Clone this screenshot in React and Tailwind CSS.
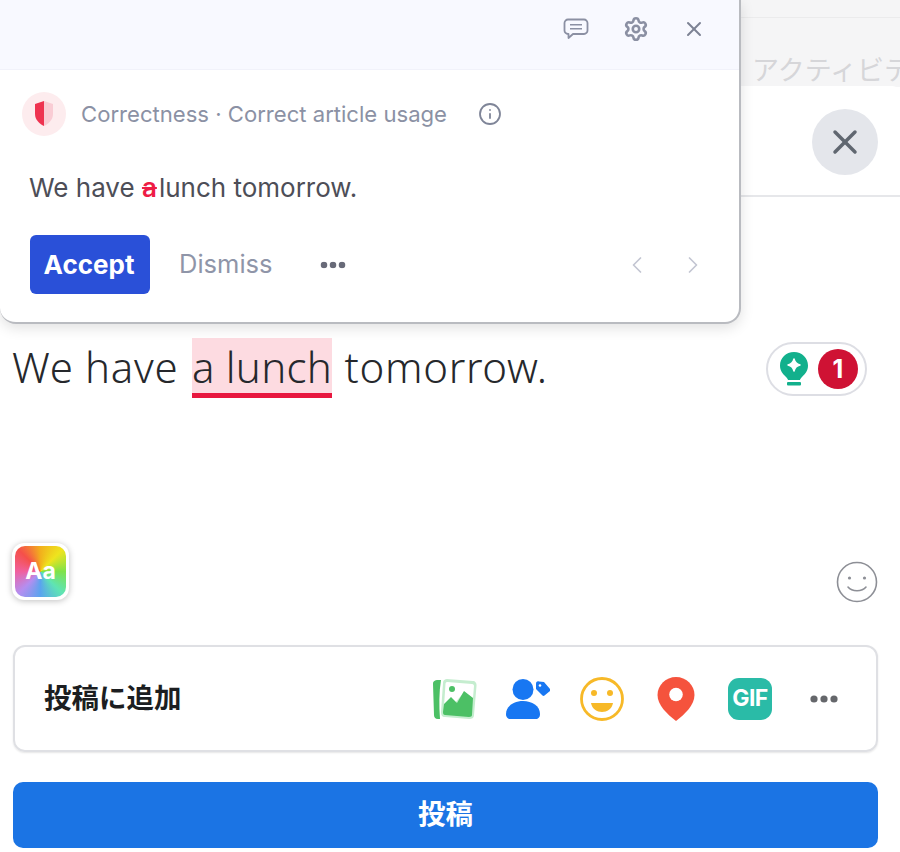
import React from 'react';
import { Settings, X, ChevronLeft, ChevronRight, Info } from 'lucide-react';

const Dots = ({ className }) => (
  <svg width="30" height="8" viewBox="0 0 30 8" className={className} fill="currentColor">
    <circle cx="5" cy="4" r="3.6" />
    <circle cx="15" cy="4" r="3.6" />
    <circle cx="25" cy="4" r="3.6" />
  </svg>
);

const ShieldIcon = () => (
  <svg width="22" height="28" viewBox="0 0 22 28">
    <path d="M11 1 L20 4 V14 C20 20 15 24 11 26 Z" fill="#f9ccd4" />
    <path d="M11 1 L2 4 V14 C2 20 7 24 11 26 Z" fill="#ee3350" />
  </svg>
);

const ChatIcon = () => (
  <svg width="26" height="22" viewBox="0 0 26 22" fill="none" stroke="#8b90a3" strokeWidth="1.8">
    <path d="M5 1.5 H21 A3.5 3.5 0 0 1 24.5 5 V12.5 A3.5 3.5 0 0 1 21 16 H10 L5.5 20 V16 H5 A3.5 3.5 0 0 1 1.5 12.5 V5 A3.5 3.5 0 0 1 5 1.5 Z" strokeLinejoin="round" />
    <path d="M7 6.8 H19 M7 10.8 H19" strokeWidth="1.5" />
  </svg>
);

const BulbIcon = () => (
  <svg width="28" height="34" viewBox="0 0 28 34">
    <path d="M14 0 C22 0 28 6 28 13.500 C28 19 25 22 22 25 C20.500 26.500 20 27.500 20 28 H8 C8 27.500 7.500 26.500 6 25 C3 22 0 19 0 13.500 C0 6 6 0 14 0 Z" fill="#12b08c" />
    <path d="M14 7 C14.800 10.500 16.500 12.200 20 13 C16.500 13.800 14.800 15.500 14 19 C13.200 15.500 11.500 13.800 8 13 C11.500 12.200 13.200 10.500 14 7 Z" fill="#fff" stroke="#fff" strokeWidth="1.500" strokeLinejoin="round" />
    <rect x="7" y="30" width="14" height="3.500" rx="1" fill="#12b08c" />
  </svg>
);

const SmileIcon = () => (
  <svg width="42" height="42" viewBox="0 0 42 42" fill="none" stroke="#8d8f96" strokeWidth="1.6">
    <circle cx="21" cy="21" r="19.5" />
    <circle cx="13.5" cy="17" r="1.6" fill="#8d8f96" stroke="none" />
    <circle cx="28.5" cy="17" r="1.6" fill="#8d8f96" stroke="none" />
    <path d="M12 26 C16 31 26 31 30 26" strokeLinecap="round" />
  </svg>
);

const PhotoIcon = () => (
  <svg width="45" height="42" viewBox="0 0 45 42">
    <path d="M1 6 C1 3 3 2 6 2 H9 C7 14 7 28 8 41 H6 C3 41 2 39 2 37 Z" fill="#4cc065" />
    <path d="M15 1 L41 3 C43 3 45 5 44.500 8 L42 37 C42 40 40 41 37 41 L13 39 C10 39 9 37 9 34 L11 5 C11 2 13 1 15 1 Z" fill="#c5edcf" />
    <path d="M15 4 L40 6 C41.500 6 42 7 42 8 L41 20 L32 14 L23 25 L19 21 L12 28 L13.500 6 C13.500 5 14 4 15 4 Z" fill="#fff" />
    <path d="M12 26 L19 19 L25 25 L32 13 L41 20 L40 37 C40 38 39 39 37 39 L13 37 C11.500 37 11 36 11 34 Z" fill="#4cc065" />
    <circle cx="20" cy="11" r="3" fill="#4cc065" />
  </svg>
);

const TagPersonIcon = () => (
  <svg width="44" height="42" viewBox="0 0 44 42" fill="#1877f2">
    <circle cx="17" cy="11.500" r="10.500" />
    <path d="M0 36 C0 28 8 23 17 23 C26 23 34 28 34 36 C34 39.500 32 41 30 41 H4 C2 41 0 39.500 0 36 Z" />
    <path d="M30 6 C30 4 31 3 33 3.500 L38 4 L44 11 C44.500 12 44.500 12.500 44 13 L38.500 17.500 C38 18 37 18 36.500 17.500 L30 11 Z" />
    <circle cx="34" cy="7.500" r="1.300" fill="#fff" />
  </svg>
);

const EmojiIcon = () => (
  <svg width="44" height="44" viewBox="0 0 44 44">
    <circle cx="22" cy="22" r="20.500" fill="none" stroke="#f7b928" strokeWidth="2.800" />
    <circle cx="14" cy="16" r="3" fill="#f7b928" />
    <circle cx="30" cy="16" r="3" fill="#f7b928" />
    <path d="M11 26 H33 C32 32 27 35 22 35 C17 35 12 32 11 26 Z" fill="#f7b928" />
  </svg>
);

const PinIcon = () => (
  <svg width="38" height="44" viewBox="0 0 38 44">
    <path d="M19 0 C29 0 37.500 8 37.500 18 C37.500 28 28 37 19 44 C10 37 .500 28 .500 18 C.500 8 9 0 19 0 Z" fill="#f5533d" />
    <circle cx="19" cy="17.500" r="6.800" fill="#fff" />
  </svg>
);

export default function App() {
  return (
    <div className="relative h-[852px] w-[900px] overflow-hidden bg-white font-['Inter',sans-serif]">
      {/* Page behind the modal */}
      <div className="flex h-[87px] flex-col bg-[#f5f5f6]">
        <div className="h-[19px] border-b border-[#ebebec]" />
        <div className="mt-[33px] pl-[752px] font-['Noto_Sans_CJK_JP',sans-serif] text-[27px] leading-[36px] whitespace-nowrap text-[#d6d6d9]">
          アクティビティ
        </div>
      </div>

      {/* Modal header */}
      <div className="-mt-px flex h-[111px] items-center justify-end rounded-tr-lg border-b-2 border-[#e6e7ea] bg-white pt-[3px] pr-[22px]">
        <button className="flex h-[66px] w-[66px] items-center justify-center rounded-full bg-[#e4e6eb]">
          <X size={40} strokeWidth={2.1} className="text-[#606770]" />
        </button>
      </div>

      {/* Post text */}
      <div className="flex items-start justify-between pt-[141px] pr-[33px] pl-3 font-['Noto_Sans',sans-serif] text-[42px] leading-[58px] font-light tracking-[0.68px] text-[#26282c]">
        <p className="whitespace-nowrap">
          We have{' '}
          <span className="mr-px ml-[2px] inline-block h-[60px] border-b-[5px] border-[#e8173f] bg-[#fddbe1] tracking-[0.25px]">a lunch</span>{' '}
          tomorrow.
        </p>
        <div className="mt-[4px] flex h-[54px] w-[101px] items-center gap-[10px] rounded-full border-2 border-[#dddee4] pl-[12px]">
          <BulbIcon />
          <span className="flex h-10 w-10 items-center justify-center rounded-full bg-[#cf1234] font-['Inter',sans-serif] text-[25px] font-bold tracking-normal text-white">
            1
          </span>
        </div>
      </div>

      {/* Background picker and emoji */}
      <div className="mt-[145px] flex items-end justify-between pr-[22px] pl-3">
        <div className="h-[57px] w-[57px] rounded-[12px] bg-white p-[3px] shadow-[0_1px_6px_rgba(0,0,0,0.25)]">
          <div className="flex h-full w-full items-center justify-center rounded-[10px] bg-[conic-gradient(from_0deg,#f2b01c,#eee41e,#7fe24a,#5fe4b4,#5aa4ee,#b48ef0,#f0609e,#f5504a,#f2b01c)] font-['Inter',sans-serif] text-[23px] font-bold text-white">
            Aa
          </div>
        </div>
        <div className="-mb-[3px]">
          <SmileIcon />
        </div>
      </div>

      {/* Add to post */}
      <div className="mt-[45px] mr-[22px] ml-[13px] flex h-[107px] items-center justify-between rounded-[12px] border-2 border-[#dfe0e4] pr-[15px] pl-[29px] shadow-[0_1px_2px_rgba(0,0,0,0.1)]">
        <span className="pb-[4px] font-['Noto_Sans_CJK_JP',sans-serif] text-[27.500px] font-bold text-[#1c1e21]">投稿に追加</span>
        <div className="flex items-center">
          <div className="flex w-[74px] justify-center"><PhotoIcon /></div>
          <div className="flex w-[74px] justify-center"><TagPersonIcon /></div>
          <div className="flex w-[74px] justify-center"><EmojiIcon /></div>
          <div className="flex w-[74px] justify-center"><PinIcon /></div>
          <div className="flex w-[74px] justify-center">
            <span className="flex h-[42px] w-[44px] items-center justify-center rounded-[11px] bg-[#2abba7] font-['Inter',sans-serif] text-[23px] font-bold tracking-tight text-white">GIF</span>
          </div>
          <div className="flex w-[74px] justify-center"><Dots className="text-[#65676b]" /></div>
        </div>
      </div>

      {/* Post button */}
      <button className="mx-[13px] mt-[30px] flex h-[66px] w-[865px] items-center justify-center rounded-[10px] bg-[#1b74e4] pb-[4px] font-['Noto_Sans_CJK_JP',sans-serif] text-[27.500px] font-bold text-white">
        投稿
      </button>

      {/* Grammar suggestion popup */}
      <div className="absolute top-0 left-0 flex h-[324px] w-[741px] flex-col rounded-b-[16px] border-r-2 border-b-2 border-[#b9bbc0] bg-white shadow-[0_4px_14px_rgba(0,0,0,0.12)]">
        <div className="flex h-[70px] items-center justify-end border-b border-[#f1f2fa] bg-[#f8f9ff] pr-[33px] pb-[12px]">
          <div className="flex w-[143px] items-center justify-between">
            <ChatIcon />
            <Settings size={26} strokeWidth={2.4} className="text-[#8b90a3]" />
            <X size={24} strokeWidth={2} className="text-[#7d8294]" />
          </div>
        </div>

        <div className="flex items-center pt-[22px] pl-[22px]">
          <span className="flex h-11 w-11 items-center justify-center rounded-full bg-[#fdecee]">
            <ShieldIcon />
          </span>
          <span className="ml-[15px] text-[22.100px] leading-[44px] whitespace-nowrap text-[#8b91a4]">
            Correctness · Correct article usage
          </span>
          <Info size={24} strokeWidth={1.8} className="ml-[31px] text-[#7f8598]" />
        </div>

        <p className="mt-[37px] pl-[29px] text-[26px] leading-[30px] whitespace-nowrap text-[#4d4e57]">
          We have <span className="mr-[2px] font-semibold text-[#ee1c45] line-through">a</span>lunch tomorrow.
        </p>

        <div className="mt-[32px] flex items-center pr-[32px] pl-[30px]">
          <button className="flex h-[59px] w-[120px] items-center justify-center rounded-[6px] bg-[#2a50d8] pr-[2px] text-[26px] font-bold text-white">
            Accept
          </button>
          <span className="ml-[29px] text-[25.500px] text-[#8f95a8]">Dismiss</span>
          <Dots className="ml-[46px] scale-90 text-[#686a78]" />
          <div className="ml-auto flex w-[84px] items-center justify-between">
            <ChevronLeft size={28} strokeWidth={1.5} className="text-[#c3c6d2]" />
            <ChevronRight size={28} strokeWidth={1.5} className="text-[#c3c6d2]" />
          </div>
        </div>
      </div>
    </div>
  );
}
